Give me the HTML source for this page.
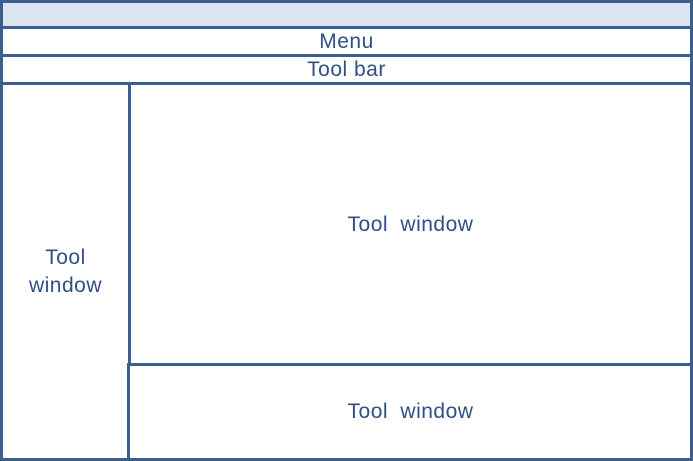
<!DOCTYPE html>
<html><head><style>
html,body{margin:0;padding:0;background:#fff;}
body{width:693px;height:461px;position:relative;overflow:hidden;font-family:"Liberation Sans",sans-serif;color:#2f5085;font-size:21px;}
.b{position:absolute;background:#3a5e8e;}
.t{position:absolute;text-align:center;line-height:28px;white-space:nowrap;letter-spacing:0.5px;}
</style></head><body>
<div style="position:absolute;left:0;top:0;width:693px;height:27px;background:#dce5f2"></div>
<div class="b" style="left:0;top:0;width:693px;height:3px"></div>
<div class="b" style="left:0;top:26px;width:693px;height:3px"></div>
<div class="b" style="left:0;top:54px;width:693px;height:3px"></div>
<div class="b" style="left:0;top:82px;width:693px;height:3px"></div>
<div class="b" style="left:0;top:458px;width:693px;height:3px"></div>
<div class="b" style="left:0;top:0;width:3px;height:461px"></div>
<div class="b" style="left:690px;top:0;width:3px;height:461px"></div>
<div class="b" style="left:128px;top:84px;width:3px;height:282px"></div>
<div class="b" style="left:127px;top:363px;width:3px;height:98px"></div>
<div class="b" style="left:127px;top:363px;width:566px;height:3px"></div>
<div class="t" style="left:0;width:693px;top:28px">Menu</div>
<div class="t" style="left:0;width:693px;top:56px">Tool bar</div>
<div class="t" style="left:131px;width:559px;top:211px;word-spacing:6px">Tool window</div>
<div class="t" style="left:131px;width:559px;top:398px;word-spacing:6px">Tool window</div>
<div class="t" style="left:3px;width:125px;top:244px">Tool</div>
<div class="t" style="left:3px;width:125px;top:272px">window</div>
</body></html>
